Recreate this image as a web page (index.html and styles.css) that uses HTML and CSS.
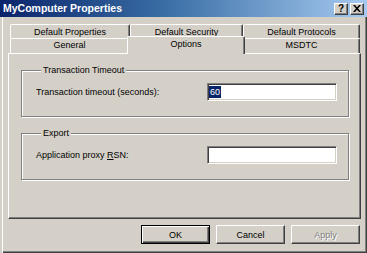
FILE: index.html
```html
<!DOCTYPE html>
<html lang="en">
<head>
  <meta charset="UTF-8" />
  <title>MyComputer Properties</title>
  <link rel="stylesheet" href="styles.css">
</head>
<body>
  <div class="window">
    <div class="titlebar">
      <span class="title">MyComputer Properties</span>
      <div class="caption-btns">
        <span class="cap-btn help">?</span>
        <span class="cap-btn close">
          <svg width="8" height="7" viewBox="0 0 8 7"><path d="M0 0h2l2 2.2L6 0h2L5 3.5 8 7H6L4 4.8 2 7H0l3-3.5z" fill="#000"/></svg>
        </span>
      </div>
    </div>

    <div class="body">
      <div class="tabs">
        <div class="tab-row back">
          <div class="tab w1">Default Properties</div>
          <div class="tab w2">Default Security</div>
          <div class="tab w3">Default Protocols</div>
        </div>
        <div class="tab-row front">
          <div class="tab w4">General</div>
          <div class="tab w5 active">Options</div>
          <div class="tab w6">MSDTC</div>
        </div>
      </div>

      <div class="panel">
        <div class="group">
          <div class="group-title">Transaction Timeout</div>
          <div class="field">
            <label>Transaction timeout (seconds):</label>
            <div class="input"><span class="sel">60</span></div>
          </div>
        </div>
        <div class="group">
          <div class="group-title">Export</div>
          <div class="field">
            <label>Application proxy <u>R</u>SN:</label>
            <div class="input"></div>
          </div>
        </div>
      </div>

      <div class="actions">
        <button class="btn default">OK</button>
        <button class="btn">Cancel</button>
        <button class="btn disabled">Apply</button>
      </div>
    </div>
  </div>
</body>
</html>
```

FILE: styles.css
```css
body {
  margin: 0;
  font-family: "Liberation Sans", Arial, sans-serif;
  font-size: 9px;
  color: #000;
  background: #d4d0c8;
}

.window {
  width: 367px;
  height: 253px;
  box-sizing: border-box;
  background: #d4d0c8;
  box-shadow: inset 2px 0 #d4d0c8, inset 3px 0 #fff,
              inset -1px -1px #404040, inset -2px -2px #808080;
}

.titlebar {
  display: flex;
  align-items: center;
  justify-content: space-between;
  height: 17px;
  padding: 0 3px;
  background: linear-gradient(to right, #0a246a, #3a6ea5 45%, #a6caf0);
}

.title {
  color: #fff;
  font-weight: bold;
  font-size: 10.5px;
  line-height: 17px;
}

.caption-btns {
  display: flex;
  gap: 2px;
}

.cap-btn {
  display: flex;
  align-items: center;
  justify-content: center;
  width: 14px;
  height: 12px;
  box-sizing: border-box;
  background: #d4d0c8;
  border: 1px solid;
  border-color: #fff #404040 #404040 #fff;
  box-shadow: inset -1px -1px #808080;
}

.cap-btn.help {
  font-weight: bold;
  font-size: 10px;
  line-height: 10px;
}

.body {
  padding: 0 6px 0 8px;
}

.tabs {
  margin: 7px 1px 0 2px;
}

.tab-row {
  display: flex;
  align-items: flex-start;
}

.tab {
  box-sizing: border-box;
  text-align: center;
  line-height: 11px;
  white-space: nowrap;
  background: #d4d0c8;
  border: 1px solid;
  border-bottom: none;
  border-color: #fff #404040 transparent #fff;
  border-radius: 2px 2px 0 0;
  box-shadow: inset -1px 0 #808080;
}

.back .tab {
  height: 14px;
  padding-top: 2px;
}

.front .tab {
  height: 15px;
  padding-top: 1px;
}

.front .tab.active {
  height: 18px;
  padding-top: 2px;
  margin: -2px -2px -1px -2px;
  z-index: 1;
}

.w1 { width: 120px; }
.w2 { width: 113px; }
.w3 { width: 117px; }
.w4 { width: 119px; }
.w5 { width: 118px; }
.w6 { width: 117px; }

.panel {
  height: 166px;
  box-sizing: border-box;
  padding: 0 11px 0 12px;
  border: 1px solid;
  border-color: #fff #404040 #404040 #fff;
  box-shadow: inset -1px -1px #808080;
}

.group {
  margin-top: 16px;
  padding: 0 11px 15px 14px;
  border: 1px solid #808080;
  box-shadow: inset 1px 1px #fff, 1px 1px #fff;
}

.group-title {
  display: table;
  margin: -6px 0 0 5px;
  padding: 0 2px;
  line-height: 11px;
  background: #d4d0c8;
}

.field {
  display: flex;
  align-items: center;
  justify-content: space-between;
  margin-top: 7px;
}

.input {
  width: 130px;
  height: 18px;
  box-sizing: border-box;
  padding: 2px 1px;
  background: #fff;
  border: 1px solid;
  border-color: #808080 #fff #fff #808080;
  box-shadow: inset 1px 1px #404040, inset -1px -1px #d4d0c8;
}

.sel {
  display: inline-block;
  padding: 0 1px;
  line-height: 12px;
  color: #fff;
  background: #0a246a;
}

.actions {
  display: flex;
  justify-content: flex-end;
  gap: 6px;
  margin-top: 6px;
  padding-right: 1px;
}

.btn {
  width: 69px;
  height: 19px;
  padding: 0;
  font-family: inherit;
  font-size: 9px;
  color: #000;
  background: #d4d0c8;
  border: 1px solid;
  border-color: #fff #404040 #404040 #fff;
  box-shadow: inset -1px -1px #808080;
}

.btn.default {
  border-color: #000;
  box-shadow: inset 1px 1px #fff, inset -1px -1px #404040, inset -2px -2px #808080;
}

.btn.disabled {
  color: #808080;
  text-shadow: 1px 1px #fff;
}
```
